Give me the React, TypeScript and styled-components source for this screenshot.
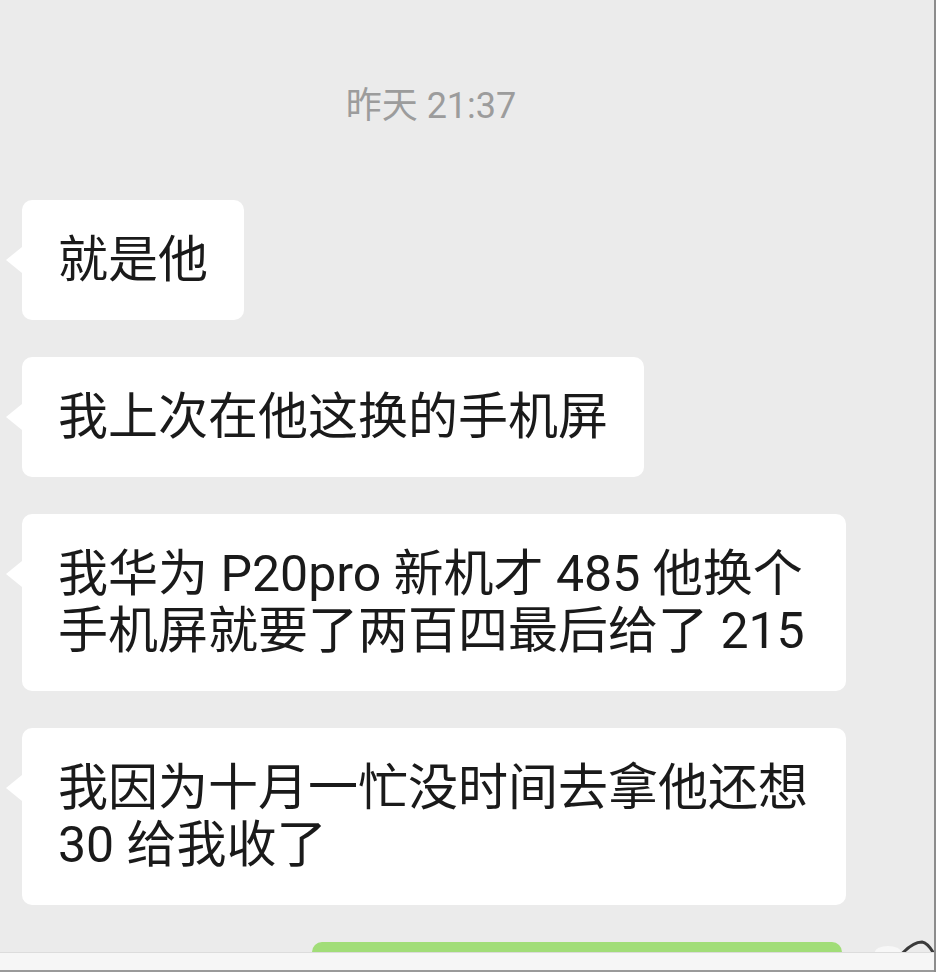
import React from "react";
import styled, { createGlobalStyle } from "styled-components";

const GlobalStyle = createGlobalStyle`
  html, body {
    margin: 0;
    padding: 0;
    width: 936px;
    height: 972px;
    overflow: hidden;
    background: #ebebeb;
  }
  * { box-sizing: border-box; }
`;

const FONT = `"Roboto", "Noto Sans CJK SC", "Noto Sans", sans-serif`;

const Screen = styled.div`
  width: 936px;
  height: 972px;
  display: flex;
  flex-direction: column;
  background: #ebebeb;
  border-right: 2px solid #8c8c8c;
  overflow: hidden;
  font-family: ${FONT};
`;

const ChatArea = styled.div`
  flex: 1;
  min-height: 0;
  overflow: hidden;
  display: flex;
  flex-direction: column;
  padding-top: 86px;
`;

const TimeRow = styled.div`
  display: flex;
  justify-content: center;
  padding-right: 72px;
`;

const TimeStamp = styled.span`
  font-size: 36px;
  line-height: 40px;
  color: #9c9c9c;
`;

const MessageList = styled.div`
  margin-top: 74px;
  display: flex;
  flex-direction: column;
  gap: 37px;
`;

const IncomingRow = styled.div`
  display: flex;
  justify-content: flex-start;
  padding-left: 22px;
`;

const OutgoingRow = styled.div`
  display: flex;
  justify-content: flex-end;
  align-items: flex-start;
  gap: 26px;
`;

const Bubble = styled.div`
  position: relative;
  max-width: 824px;
  background: #ffffff;
  border-radius: 10px;
  padding: 31.5px 36px;
  font-size: 50px;
  line-height: 57px;
  color: #1a1a1a;
  word-break: break-all;

  &::before {
    content: "";
    position: absolute;
    left: -16px;
    top: 47px;
    border-top: 13px solid transparent;
    border-bottom: 13px solid transparent;
    border-right: 16px solid #ffffff;
  }
`;

const GreenBubble = styled.div<{ $width: number }>`
  width: ${(p) => p.$width}px;
  height: 120px;
  background: #a1dd78;
  border-radius: 10px;
`;

const Avatar = styled.div`
  width: 66px;
  height: 80px;
  margin-top: -4px;
  flex-shrink: 0;
`;

const BottomBar = styled.div`
  height: 20px;
  flex-shrink: 0;
  background: #f6f6f6;
  border-top: 1px solid #dcdcdc;
  border-bottom: 2px solid #9a9a9a;
`;

const messages = [
  "就是他",
  "我上次在他这换的手机屏",
  "我华为 P20pro 新机才 485 他换个手机屏就要了两百四最后给了 215",
  "我因为十月一忙没时间去拿他还想 30 给我收了",
];

export default function App() {
  return (
    <>
      <GlobalStyle />
      <Screen>
        <ChatArea>
          <TimeRow>
            <TimeStamp>昨天 21:37</TimeStamp>
          </TimeRow>
          <MessageList>
            {messages.map((m, i) => (
              <IncomingRow key={i}>
                <Bubble>{m}</Bubble>
              </IncomingRow>
            ))}
            <OutgoingRow>
              <GreenBubble $width={530} />
              <Avatar>
                <svg width="66" height="80" viewBox="0 0 66 80">
                  <ellipse cx="20" cy="14" rx="13" ry="6" fill="#f7f7f7" />
                  <path
                    d="M32 18 Q44 4 54 4 Q60 5 66 16"
                    fill="none"
                    stroke="#3a3a3a"
                    strokeWidth="3"
                  />
                </svg>
              </Avatar>
            </OutgoingRow>
          </MessageList>
        </ChatArea>
        <BottomBar />
      </Screen>
    </>
  );
}
